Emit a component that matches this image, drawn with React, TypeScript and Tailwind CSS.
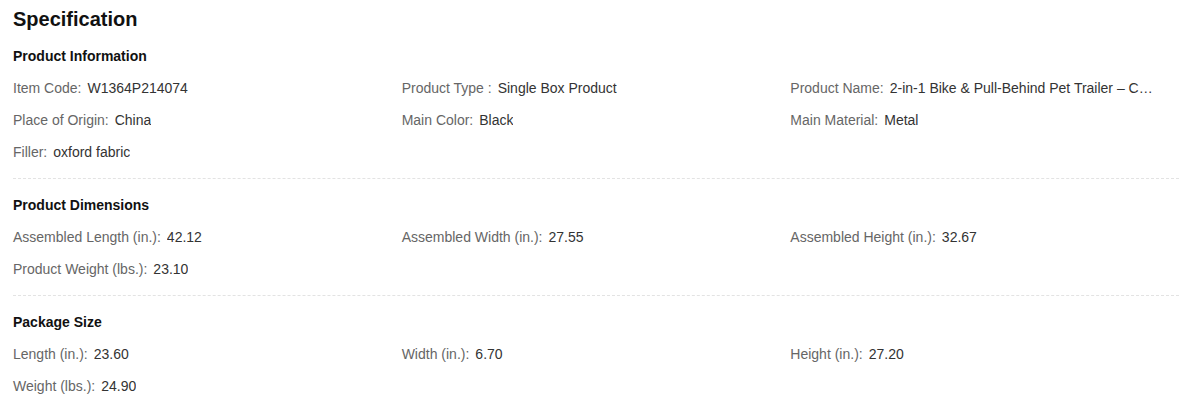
import React from 'react';

type Spec = { label: string; value: string };

const sections: { title: string; items: Spec[] }[] = [
  {
    title: 'Product Information',
    items: [
      { label: 'Item Code:', value: 'W1364P214074' },
      { label: 'Product Type :', value: 'Single Box Product' },
      { label: 'Product Name:', value: '2-in-1 Bike & Pull-Behind Pet Trailer – Convertible Stroller with Canopy' },
      { label: 'Place of Origin:', value: 'China' },
      { label: 'Main Color:', value: 'Black' },
      { label: 'Main Material:', value: 'Metal' },
      { label: 'Filler:', value: 'oxford fabric' },
    ],
  },
  {
    title: 'Product Dimensions',
    items: [
      { label: 'Assembled Length (in.):', value: '42.12' },
      { label: 'Assembled Width (in.):', value: '27.55' },
      { label: 'Assembled Height (in.):', value: '32.67' },
      { label: 'Product Weight (lbs.):', value: '23.10' },
    ],
  },
  {
    title: 'Package Size',
    items: [
      { label: 'Length (in.):', value: '23.60' },
      { label: 'Width (in.):', value: '6.70' },
      { label: 'Height (in.):', value: '27.20' },
      { label: 'Weight (lbs.):', value: '24.90' },
    ],
  },
];

export default function App() {
  return (
    <div className="bg-white pl-[13px] pt-[5px] font-['Liberation_Sans',Arial,sans-serif] text-[14px]">
      <h2 className="h-[28px] mb-[7px] text-[20px] leading-[28px] font-bold text-[#111]">Specification</h2>

      {sections.map((section, i) => (
        <div
          key={section.title}
          className={`${i < sections.length - 1 ? 'pb-[10px] border-b border-dashed border-[#e3e3e3] mb-[10px]' : ''}`}
        >
          <div className="h-[32px] flex items-center font-bold text-[#111]">{section.title}</div>
          <div className="grid grid-cols-3">
            {section.items.map((item) => (
              <div key={item.label} className="h-[32px] flex items-center pr-[26px] min-w-0">
                <span className="shrink-0 text-[#666]">{item.label}</span>
                <span className="ml-[6px] truncate text-[#333]">{item.value}</span>
              </div>
            ))}
          </div>
        </div>
      ))}
    </div>
  );
}
